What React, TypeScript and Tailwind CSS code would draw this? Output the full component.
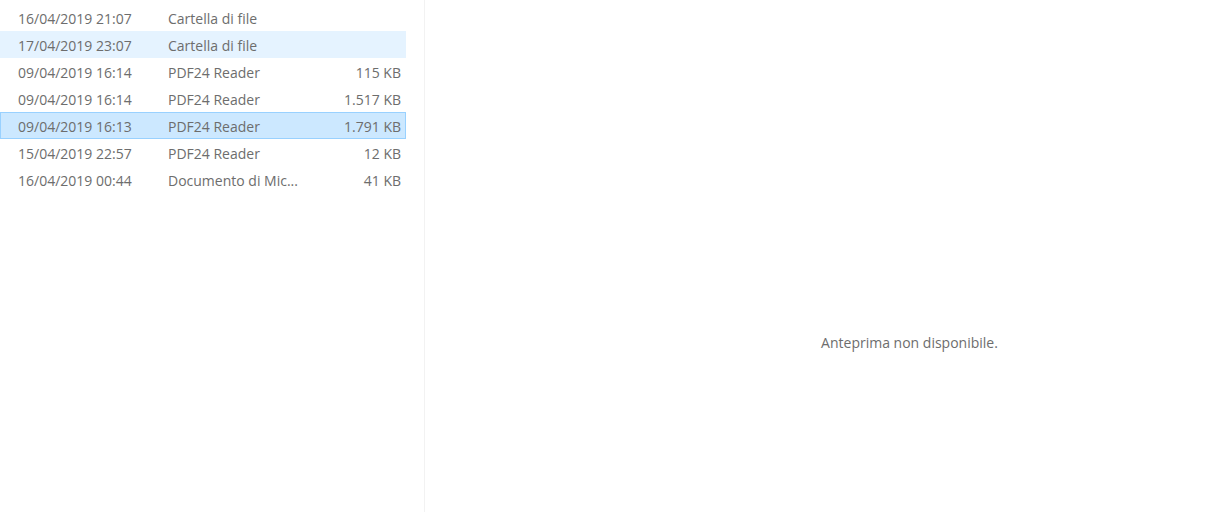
import React from "react";

const files = [
  { date: "16/04/2019 21:07", type: "Cartella di file", size: "" },
  { date: "17/04/2019 23:07", type: "Cartella di file", size: "", hover: true },
  { date: "09/04/2019 16:14", type: "PDF24 Reader", size: "115 KB" },
  { date: "09/04/2019 16:14", type: "PDF24 Reader", size: "1.517 KB" },
  { date: "09/04/2019 16:13", type: "PDF24 Reader", size: "1.791 KB", selected: true },
  { date: "15/04/2019 22:57", type: "PDF24 Reader", size: "12 KB" },
  { date: "16/04/2019 00:44", type: "Documento di Mic...", size: "41 KB" },
];

export default function App() {
  return (
    <div
      className="flex h-[512px] w-[1228px] bg-white text-[14px] text-[#6d6d6d]"
      style={{ fontFamily: '"Open Sans", "Noto Sans", sans-serif' }}
    >
      <div className="w-[425px] shrink-0 border-r border-[#f2f2f2] pt-[4px]">
        {files.map((f, i) => (
          <div
            key={i}
            className={
              "flex h-[27px] w-[406px] items-center border pt-[2px] " +
              (f.selected
                ? "border-[#99d1ff] bg-[#cce8ff]"
                : f.hover
                ? "border-[#e5f3ff] bg-[#e5f3ff]"
                : "border-transparent")
            }
          >
            <span className="w-[167px] pl-[17px]">{f.date}</span>
            <span className="flex-1">{f.type}</span>
            <span className="pr-[4px] text-right">{f.size}</span>
          </div>
        ))}
      </div>
      <div className="flex flex-1 items-center justify-center pl-[166px] pt-[172px] text-[14px]">
        Anteprima non disponibile.
      </div>
    </div>
  );
}
